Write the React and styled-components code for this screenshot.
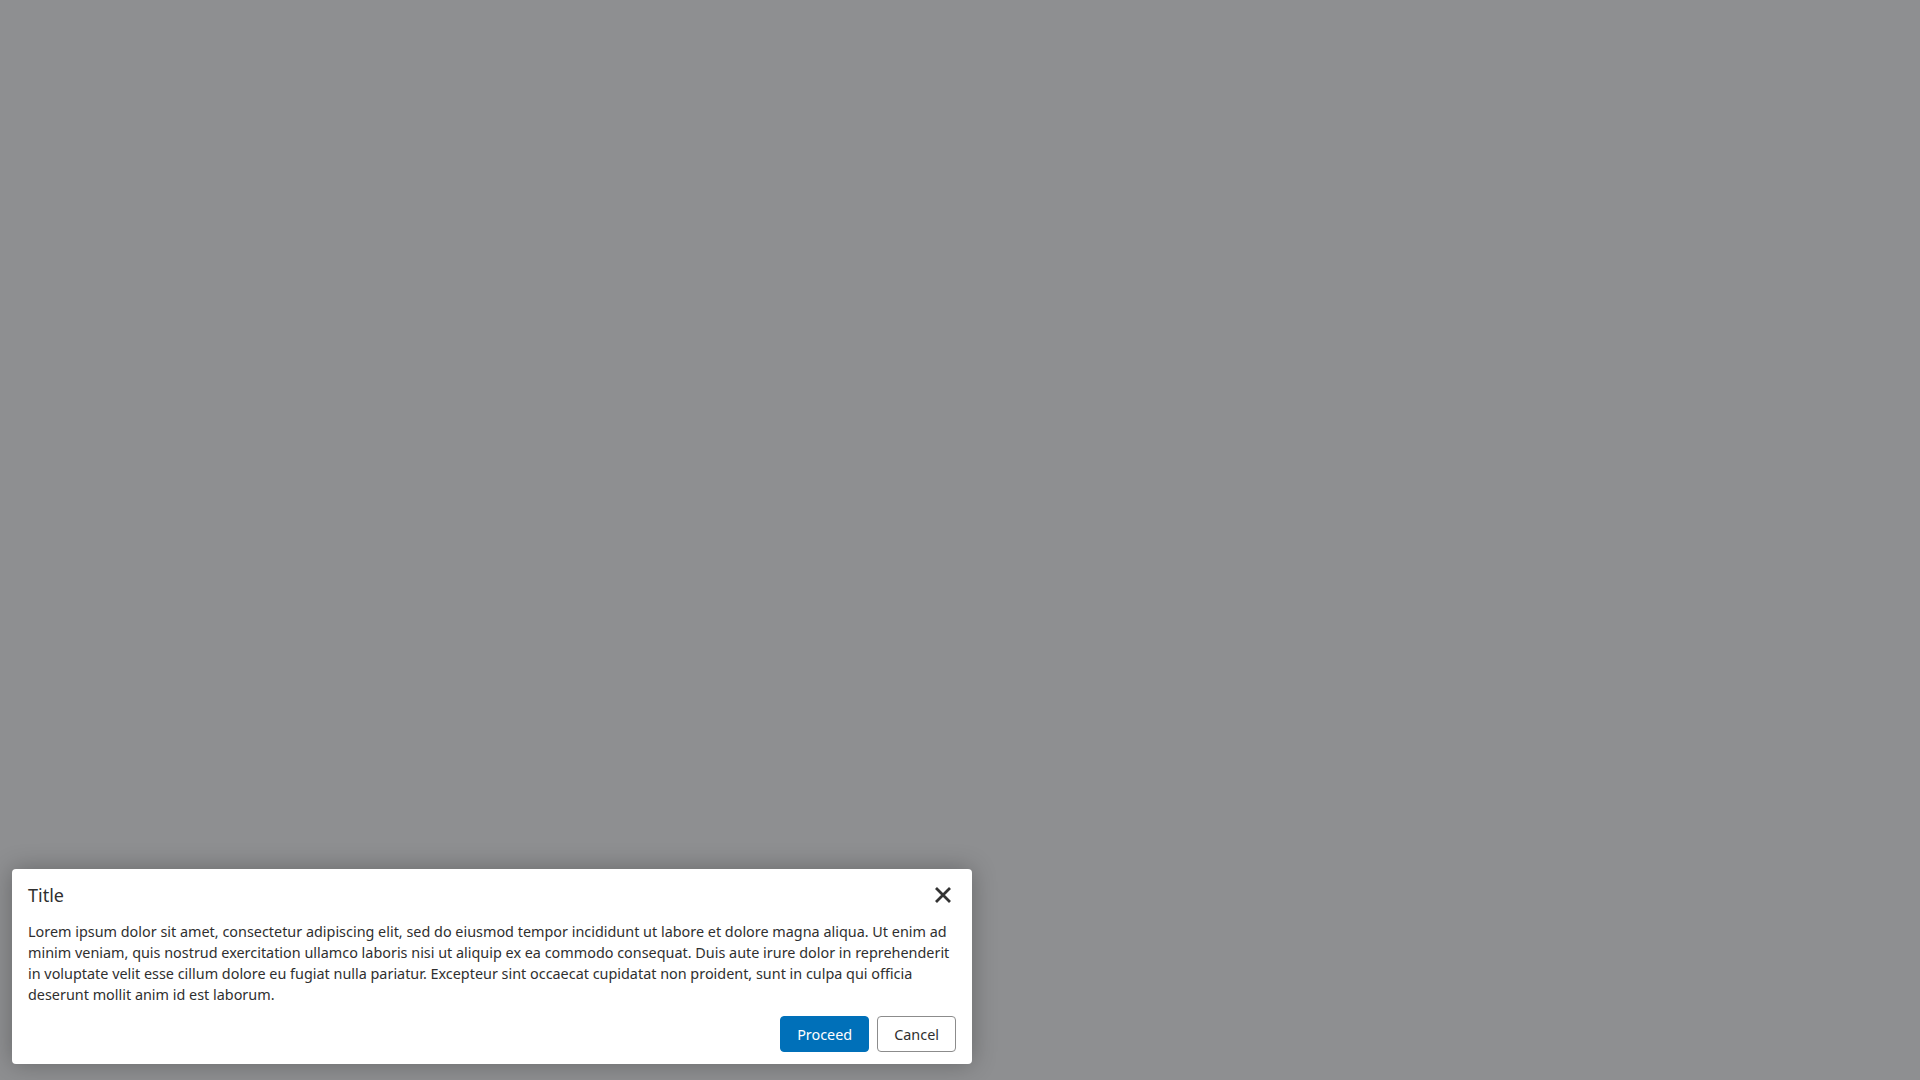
import React from 'react';
import styled, { createGlobalStyle } from 'styled-components';

const GlobalStyle = createGlobalStyle`
    html, body {
        margin: 0;
        padding: 0;
        height: 100%;
    }
    body {
        font-family: "Noto Sans", "Open Sans", sans-serif;
        background: #8e8f91;
    }
`;

const Backdrop = styled.div`
    position: fixed;
    inset: 0;
    background: #8e8f91;
    display: flex;
    align-items: flex-end;
    justify-content: flex-start;
    padding: 0 0 16px 12px;
    box-sizing: border-box;
`;

const Dialog = styled.div`
    width: 960px;
    background: #ffffff;
    border-radius: 4px;
    box-shadow: 0 0 24px rgba(0, 0, 0, 0.28);
    padding: 12px 16px 12px;
    box-sizing: border-box;
    color: #2f2f2f;
`;

const Header = styled.div`
    display: flex;
    align-items: center;
    justify-content: space-between;
    height: 28px;
`;

const Title = styled.h2`
    margin: 0;
    font-size: 18px;
    font-weight: 400;
    line-height: 24px;
    color: #2f2f2f;
`;

const CloseButton = styled.button`
    border: none;
    background: none;
    padding: 0;
    width: 28px;
    height: 28px;
    display: flex;
    align-items: center;
    justify-content: center;
    color: #333;
    cursor: pointer;
    margin-right: -1px;
`;

const Body = styled.p`
    margin: 12px 0 0;
    font-size: 14.4px;
    line-height: 21px;
    color: #2f2f2f;
`;

const Footer = styled.div`
    display: flex;
    justify-content: flex-end;
    gap: 8px;
    margin-top: 11px;
`;

const Button = styled.button`
    height: 36px;
    padding: 0 16px;
    border-radius: 4px;
    font-family: inherit;
    font-size: 14.4px;
    cursor: pointer;
    background: ${(p) => (p.$primary ? '#0070b9' : '#ffffff')};
    color: ${(p) => (p.$primary ? '#ffffff' : '#2f2f2f')};
    border: 1px solid ${(p) => (p.$primary ? '#0070b9' : '#8c8c8c')};
`;

const CloseIcon = () => (
    <svg width="28" height="28" viewBox="0 0 28 28" fill="none" stroke="currentColor" strokeWidth="2.8">
        <path d="M7 7L21 21M21 7L7 21" />
    </svg>
);

export default function App() {
    return (
        <>
            <GlobalStyle />
            <Backdrop>
                <Dialog role="dialog">
                    <Header>
                        <Title>Title</Title>
                        <CloseButton aria-label="Close">
                            <CloseIcon />
                        </CloseButton>
                    </Header>
                    <Body>
                        Lorem ipsum dolor sit amet, consectetur adipiscing elit, sed do eiusmod tempor incididunt ut labore et dolore magna aliqua. Ut enim ad minim veniam, quis nostrud exercitation ullamco laboris nisi ut aliquip ex ea commodo consequat. Duis aute irure dolor in reprehenderit in voluptate velit esse cillum dolore eu fugiat nulla pariatur. Excepteur sint occaecat cupidatat non proident, sunt in culpa qui officia deserunt mollit anim id est laborum.
                    </Body>
                    <Footer>
                        <Button $primary>Proceed</Button>
                        <Button>Cancel</Button>
                    </Footer>
                </Dialog>
            </Backdrop>
        </>
    );
}
